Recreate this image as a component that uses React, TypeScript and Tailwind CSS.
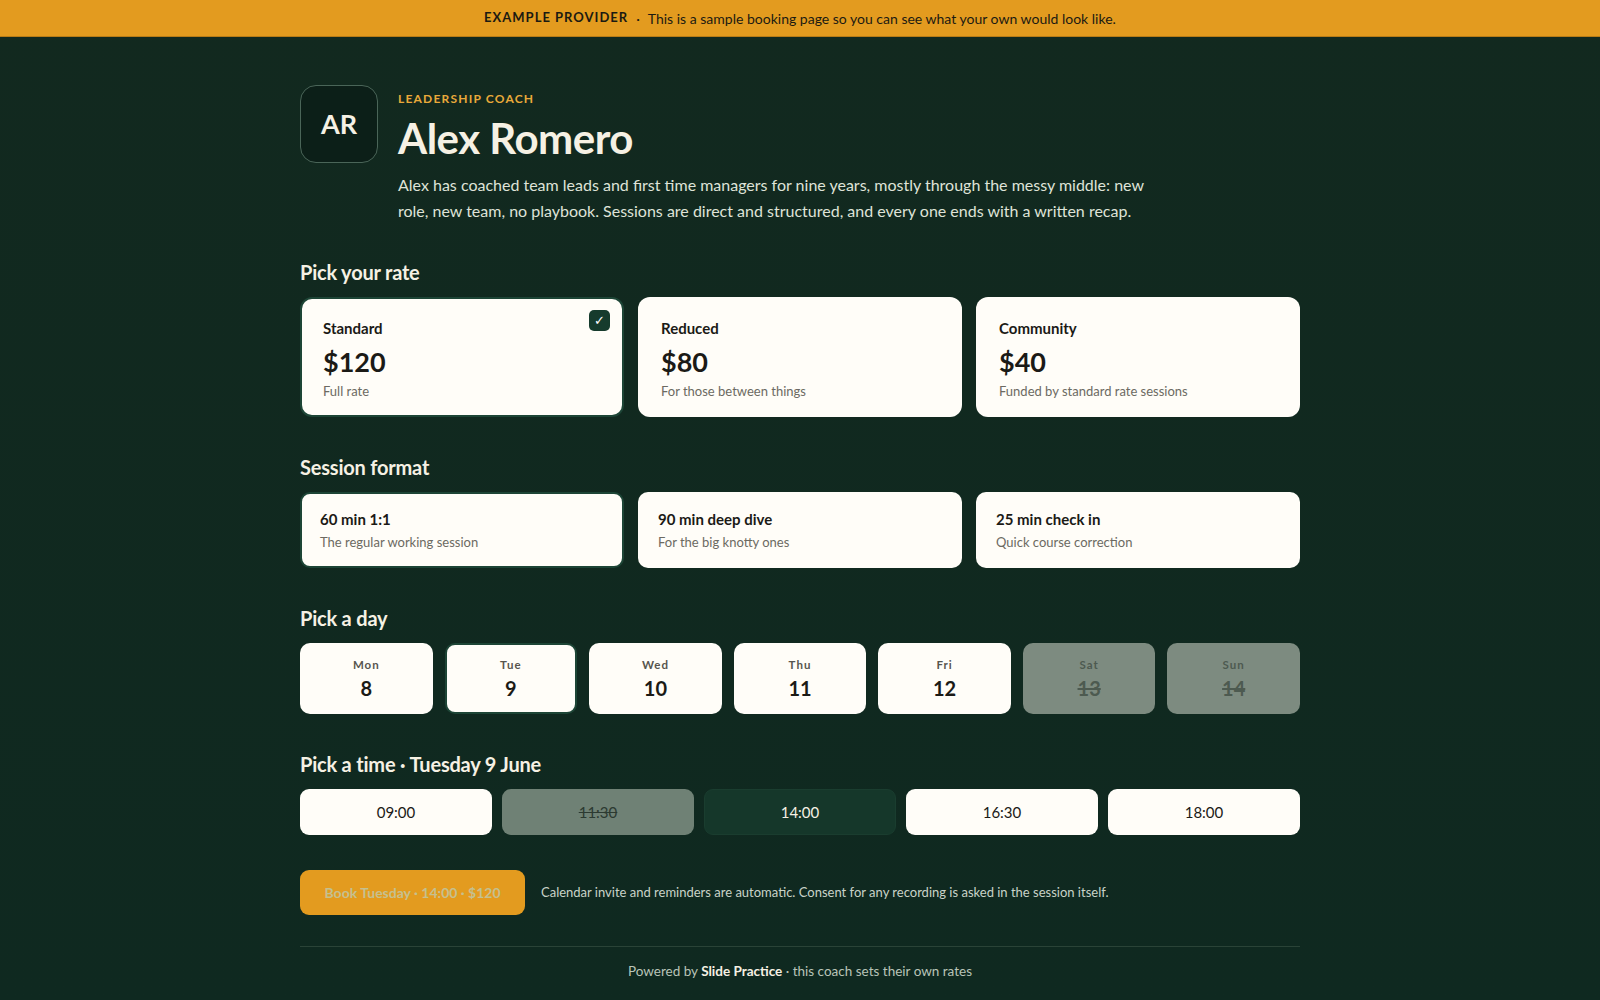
import { useState } from "react";

const RATES = [
  { name: "Standard", price: "$120", note: "Full rate" },
  { name: "Reduced", price: "$80", note: "For those between things" },
  { name: "Community", price: "$40", note: "Funded by standard rate sessions" },
];

const FORMATS = [
  { name: "60 min 1:1", note: "The regular working session" },
  { name: "90 min deep dive", note: "For the big knotty ones" },
  { name: "25 min check in", note: "Quick course correction" },
];

const DAYS = [
  { d: "Mon", n: 8, off: false },
  { d: "Tue", n: 9, off: false },
  { d: "Wed", n: 10, off: false },
  { d: "Thu", n: 11, off: false },
  { d: "Fri", n: 12, off: false },
  { d: "Sat", n: 13, off: true },
  { d: "Sun", n: 14, off: true },
];

const TIMES = [
  { t: "09:00", off: false },
  { t: "11:30", off: true },
  { t: "14:00", off: false },
  { t: "16:30", off: false },
  { t: "18:00", off: false },
];

function SectionTitle({ children }: { children: React.ReactNode }) {
  return <h2 className="text-[20px] font-bold text-[#f6f1e4] tracking-[-0.2px] mb-[11px] leading-7">{children}</h2>;
}

export default function App() {
  const [rate, setRate] = useState(0);
  const [format, setFormat] = useState(0);
  const [day, setDay] = useState(1);
  const [time, setTime] = useState(2);

  return (
    <div className="min-h-screen bg-gradient-to-b from-[#12291f] to-[#0f2920] font-['Lato','Liberation_Sans',sans-serif] text-[#f6f1e4]">
      {/* demo banner */}
      <div className="h-[37px] bg-[#e39b1f] flex items-center justify-center text-[14px] text-[#1b1a12] border-b border-[#b97c16]">
        <span className="font-bold tracking-[1px] text-[13px]">EXAMPLE PROVIDER</span>
        <span className="mx-[8px]">·</span>
        <span>This is a sample booking page so you can see what your own would look like.</span>
      </div>

      <main className="w-[1000px] mx-auto pt-[48px]">
        {/* coach header */}
        <div className="flex gap-[20px]">
          <div className="w-[78px] h-[78px] shrink-0 rounded-[16px] border border-[#4a6558] bg-[#0c1f18] flex items-center justify-center text-[27px] font-bold text-[#f6f1e4]">
            AR
          </div>
          <div>
            <div className="text-[12px] font-bold tracking-[1.2px] text-[#e9a93a] mt-[5px]">LEADERSHIP COACH</div>
            <h1 className="text-[42px] font-bold leading-[52px] tracking-[-0.5px] mt-[4px]">Alex Romero</h1>
            <p className="text-[16px] leading-[25.5px] text-[#dfe3d8] max-w-[760px] mt-[8px]">
              Alex has coached team leads and first time managers for nine years, mostly through the messy middle: new
              role, new team, no playbook. Sessions are direct and structured, and every one ends with a written recap.
            </p>
          </div>
        </div>

        {/* rate */}
        <section className="mt-[35px]">
          <SectionTitle>Pick your rate</SectionTitle>
          <div className="grid grid-cols-3 gap-[14px]">
            {RATES.map((r, i) => (
              <button
                key={r.name}
                onClick={() => setRate(i)}
                className={`relative text-left bg-[#fffdf8] rounded-[12px] h-[120px] px-[21px] pt-[4px] ${
                  rate === i ? "border-2 border-[#1d4536]" : "border-2 border-transparent"
                }`}
              >
                <div className="text-[15px] font-bold text-[#1b1a16]">{r.name}</div>
                <div className="text-[27px] font-bold text-[#1b1a16] leading-[34px] mt-[5px]">{r.price}</div>
                <div className="text-[13px] text-[#6c6a62] mt-[3px]">{r.note}</div>
                {rate === i && (
                  <span className="absolute top-[11px] right-[12px] w-[21px] h-[21px] rounded-[5px] bg-[#163b2d] text-white text-[13px] flex items-center justify-center">
                    ✓
                  </span>
                )}
              </button>
            ))}
          </div>
        </section>

        {/* format */}
        <section className="mt-[36px]">
          <SectionTitle>Session format</SectionTitle>
          <div className="grid grid-cols-3 gap-[14px]">
            {FORMATS.map((f, i) => (
              <button
                key={f.name}
                onClick={() => setFormat(i)}
                className={`text-left bg-[#fffdf8] rounded-[10px] h-[76px] px-[18px] ${
                  format === i ? "border-2 border-[#1d4536]" : "border-2 border-transparent"
                }`}
              >
                <div className="text-[15px] font-bold text-[#1b1a16]">{f.name}</div>
                <div className="text-[13px] text-[#6c6a62] mt-[2px]">{f.note}</div>
              </button>
            ))}
          </div>
        </section>

        {/* day */}
        <section className="mt-[36px]">
          <SectionTitle>Pick a day</SectionTitle>
          <div className="grid grid-cols-7 gap-[12px]">
            {DAYS.map((d, i) => (
              <button
                key={d.d}
                disabled={d.off}
                onClick={() => setDay(i)}
                className={`h-[71px] rounded-[10px] flex flex-col items-center justify-center ${
                  d.off
                    ? "bg-[#7d8b80] text-[#4d5a50]"
                    : day === i
                    ? "bg-[#fffdf8] border-2 border-[#1d4536] text-[#1b1a16]"
                    : "bg-[#fffdf8] text-[#1b1a16]"
                }`}
              >
                <span className={`text-[11.5px] font-bold tracking-[1px] ${d.off ? "text-[#4d5a50]" : "text-[#57554e]"}`}>{d.d}</span>
                <span className={`text-[20px] font-bold leading-[26px] mt-[2px] ${d.off ? "line-through" : ""}`}>{d.n}</span>
              </button>
            ))}
          </div>
        </section>

        {/* time */}
        <section className="mt-[36px]">
          <SectionTitle>Pick a time · Tuesday 9 June</SectionTitle>
          <div className="grid grid-cols-5 gap-[10px]">
            {TIMES.map((t, i) => (
              <button
                key={t.t}
                disabled={t.off}
                onClick={() => setTime(i)}
                className={`h-[46px] rounded-[9px] text-[15px] ${
                  t.off
                    ? "bg-[#6f8175] text-[#2c3a31] line-through"
                    : time === i
                    ? "bg-[#15372a] text-[#f6f1e4] border border-[#1a3d2f]"
                    : "bg-[#fffdf8] text-[#1b1a16]"
                }`}
              >
                {t.t}
              </button>
            ))}
          </div>
        </section>

        {/* book */}
        <div className="mt-[35px] flex items-center gap-[16px]">
          <button className="h-[45px] w-[225px] rounded-[9px] bg-[#e39b1f] text-[14px] font-bold text-[#c5c08f]">
            Book Tuesday · 14:00 · $120
          </button>
          <p className="text-[13px] text-[#c9d3c8]">
            Calendar invite and reminders are automatic. Consent for any recording is asked in the session itself.
          </p>
        </div>

        <footer className="mt-[31px] border-t border-[#2a4337] pt-[14px] pb-[18px] text-center text-[13.5px] text-[#b9c4b8]">
          Powered by <span className="font-bold text-[#f6f1e4]">Slide Practice</span> · this coach sets their own rates
        </footer>
      </main>
    </div>
  );
}
